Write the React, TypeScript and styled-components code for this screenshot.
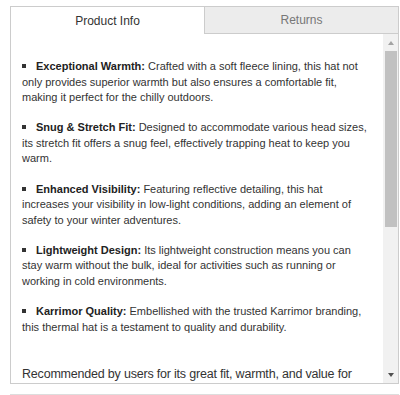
import { useState } from "react";
import styled, { createGlobalStyle } from "styled-components";

const Global = createGlobalStyle`
  html, body {
    margin: 0;
    padding: 0;
    background: #fff;
    font-family: "Liberation Sans", Arial, sans-serif;
  }
`;

const Wrapper = styled.div`
  margin: 6px 1px 0 10px;
`;

const TabBar = styled.div`
  display: flex;
`;

const Tab = styled.button<{ $active?: boolean }>`
  flex: 1;
  height: 28px;
  padding: 0;
  font-family: inherit;
  font-size: 12px;
  cursor: pointer;
  background: ${({ $active }) => ($active ? "#fff" : "#ececec")};
  color: ${({ $active }) => ($active ? "#333" : "#777")};
  border: 1px solid #ccc;
  border-bottom: ${({ $active }) => ($active ? "none" : "1px solid #ccc")};
  border-right: ${({ $active }) => ($active ? "none" : "1px solid #ccc")};
`;

const Panel = styled.div`
  display: flex;
  height: 349px;
  border: 1px solid #ccc;
  border-top: none;
  color: #333;
`;

const ScrollArea = styled.div`
  flex: 1;
  overflow: hidden;
`;

const Content = styled.div`
  padding: 25px 11px 60px 11px;
`;

/* hand-drawn scrollbar, the headless browser hides native ones */
const ScrollBar = styled.div`
  width: 15px;
  display: flex;
  flex-direction: column;
  background: #f1f1f1;
`;

const ArrowBtn = styled.div<{ $down?: boolean }>`
  height: 17px;
  display: flex;
  align-items: center;
  justify-content: center;

  &::before {
    content: "";
    width: 0;
    height: 0;
    border-left: 3.5px solid transparent;
    border-right: 3.5px solid transparent;
    ${({ $down }) =>
      $down ? "border-top: 4px solid #505050;" : "border-bottom: 4px solid #a3a3a3;"}
  }
`;

const Track = styled.div`
  flex: 1;
`;

const Thumb = styled.div`
  margin: 0 1px 0 2px;
  background: #c1c1c1;
`;

const List = styled.ul`
  list-style: none;
  margin: 0 0 30px;
  padding: 0;
`;

const Item = styled.li`
  font-size: 11px;
  line-height: 15.6px;
  margin-bottom: 14.5px;

  &::before {
    content: "";
    display: inline-block;
    width: 4px;
    height: 4px;
    background: #333;
    margin: 0 10px 2px 0;
    vertical-align: middle;
  }
`;

const Label = styled.strong`
  color: #222;
`;

const Para = styled.p`
  font-size: 12.5px;
  letter-spacing: -0.2px;
  line-height: 19px;
  margin: 0 0 16px;
`;

const NextSection = styled.div`
  margin-top: 10px;
  border-top: 1px solid #ddd;
  height: 10px;
`;

const features = [
  {
    title: "Exceptional Warmth:",
    text: "Crafted with a soft fleece lining, this hat not only provides superior warmth but also ensures a comfortable fit, making it perfect for the chilly outdoors.",
  },
  {
    title: "Snug & Stretch Fit:",
    text: "Designed to accommodate various head sizes, its stretch fit offers a snug feel, effectively trapping heat to keep you warm.",
  },
  {
    title: "Enhanced Visibility:",
    text: "Featuring reflective detailing, this hat increases your visibility in low-light conditions, adding an element of safety to your winter adventures.",
  },
  {
    title: "Lightweight Design:",
    text: "Its lightweight construction means you can stay warm without the bulk, ideal for activities such as running or working in cold environments.",
  },
  {
    title: "Karrimor Quality:",
    text: "Embellished with the trusted Karrimor branding, this thermal hat is a testament to quality and durability.",
  },
];

export default function App() {
  const [tab, setTab] = useState(0);
  const thumbHeight = 176;
  return (
    <Wrapper>
      <Global />
      <TabBar>
        <Tab $active={tab === 0} onClick={() => setTab(0)}>
          Product Info
        </Tab>
        <Tab $active={tab === 1} onClick={() => setTab(1)}>
          Returns
        </Tab>
      </TabBar>
      <Panel>
        <ScrollArea>
          <Content>
            <List>
              {features.map((f) => (
                <Item key={f.title}>
                  <Label>{f.title}</Label> {f.text}
                </Item>
              ))}
            </List>
            <Para>
              Recommended by users for its great fit, warmth, and value for
              money, the Karrimor Thermal Hat is a dependable choice for anyone
              looking to stay cosy and protected through the colder months.
            </Para>
          </Content>
        </ScrollArea>
        <ScrollBar>
          <ArrowBtn />
          <Track>
            <Thumb style={{ height: thumbHeight }} />
          </Track>
          <ArrowBtn $down />
        </ScrollBar>
      </Panel>
      <NextSection />
    </Wrapper>
  );
}
